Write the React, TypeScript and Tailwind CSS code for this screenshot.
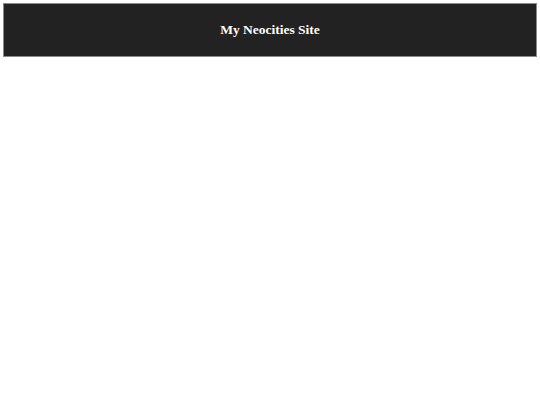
export default function App() {
  return (
    <div className="min-h-[405px] bg-white p-[3px]">
      <header className="flex h-[54px] items-center justify-center border border-[#8a8a8a] bg-[#222222]">
        <h1 className="font-['Liberation_Serif',serif] text-[13.5px] font-bold text-white">My Neocities Site</h1>
      </header>
    </div>
  );
}
